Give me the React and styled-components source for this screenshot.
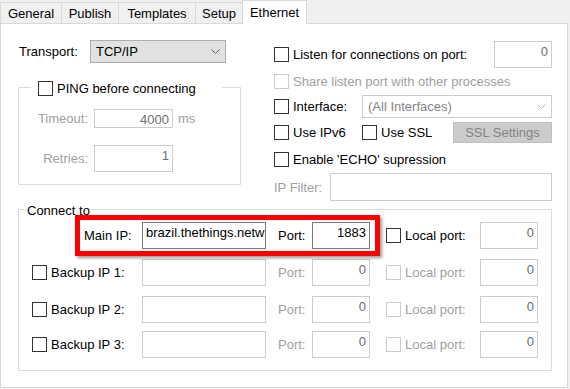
import React from "react";
import styled, { createGlobalStyle } from "styled-components";

const GlobalStyle = createGlobalStyle`
  html, body {
    margin: 0;
    padding: 0;
    background: #f0f0f0;
  }
  body {
    font-family: "Liberation Sans", Arial, sans-serif;
    font-size: 13px;
    color: #000;
  }
  * {
    box-sizing: border-box;
  }
`;

const Window = styled.div`
  width: 570px;
  height: 389px;
  overflow: hidden;
  background: #f0f0f0;
`;

const TabStrip = styled.div`
  display: flex;
  align-items: flex-end;
  height: 23px;
`;

const Tab = styled.div`
  width: ${(p) => p.$w}px;
  height: ${(p) => (p.$active ? 24 : 21)}px;
  margin-bottom: ${(p) => (p.$active ? -1 : 0)}px;
  margin-left: ${(p) => (p.$first ? 0 : -1)}px;
  padding-bottom: ${(p) => (p.$active ? 1 : 0)}px;
  border: 1px solid #d9d9d9;
  border-bottom: none;
  background: ${(p) => (p.$active ? "#fff" : "#f0f0f0")};
  display: flex;
  align-items: center;
  justify-content: center;
  line-height: 15px;
  position: relative;
  z-index: ${(p) => (p.$active ? 1 : 0)};
`;

const Panel = styled.div`
  width: 568px;
  height: 365px;
  background: #fff;
  border: 1px solid #d9d9d9;
  padding: 16px 0 0 17px;
`;

const TopSection = styled.div`
  display: flex;
  align-items: flex-start;
`;

const LeftColumn = styled.div`
  width: 223px;
  display: flex;
  flex-direction: column;
`;

const RightColumn = styled.div`
  width: 278px;
  margin-left: 33px;
  margin-top: 1px;
  display: flex;
  flex-direction: column;
`;

const Row = styled.div`
  display: flex;
  align-items: center;
  height: ${(p) => p.$h || 27}px;
  margin-top: ${(p) => p.$mt || 0}px;
  margin-left: ${(p) => p.$ml || 0}px;
  line-height: 15px;
  white-space: nowrap;
`;

const Text = styled.span`
  color: ${(p) => (p.$disabled ? "#a0a0a0" : "#000")};
  white-space: nowrap;
`;

const Cell = styled.div`
  display: flex;
  align-items: center;
  flex-shrink: 0;
  width: ${(p) => p.$w}px;
  padding-left: ${(p) => p.$pl || 0}px;
  padding-right: ${(p) => p.$pr || 0}px;
  justify-content: ${(p) => (p.$right ? "flex-end" : "flex-start")};
  color: ${(p) => (p.$disabled ? "#a0a0a0" : "#000")};
`;

const Check = styled.span`
  display: inline-block;
  flex-shrink: 0;
  width: 15px;
  height: 15px;
  margin-right: 4px;
  background: #fff;
  border: 1px solid ${(p) => (p.$disabled ? "#cccccc" : "#333333")};
`;

const Field = styled.div`
  flex-shrink: 0;
  width: ${(p) => p.$w}px;
  height: ${(p) => p.$h || 27}px;
  margin-left: ${(p) => (p.$push ? "auto" : "0")};
  border: 1px solid ${(p) => (p.$strong ? "#7a7a7a" : "#cccccc")};
  background: #fff;
  padding: 2px 3px 0 3px;
  line-height: 15px;
  overflow: hidden;
  white-space: nowrap;
  text-align: ${(p) => (p.$left ? "left" : "right")};
  color: ${(p) => (p.$dark ? "#000" : "#6d6d6d")};
`;

const Select = styled.div`
  flex-shrink: 0;
  width: ${(p) => p.$w}px;
  height: 23px;
  margin-left: ${(p) => (p.$push ? "auto" : "0")};
  display: flex;
  align-items: center;
  justify-content: space-between;
  padding: 0 5px 0 5px;
  background: ${(p) => (p.$disabled ? "#fff" : "#e1e1e1")};
  border: 1px solid ${(p) => (p.$disabled ? "#cccccc" : "#adadad")};
  color: ${(p) => (p.$disabled ? "#838383" : "#000")};
  line-height: 15px;
`;

const Button = styled.div`
  flex-shrink: 0;
  width: 99px;
  height: 21px;
  margin-left: auto;
  display: flex;
  align-items: center;
  justify-content: center;
  background: #cccccc;
  border: 1px solid #bfbfbf;
  color: #838383;
`;

const GroupBox = styled.div`
  width: ${(p) => p.$w}px;
  margin-top: ${(p) => p.$mt}px;
  border: 1px solid #dcdcdc;
  padding: 0 0 12px ${(p) => p.$pl || 0}px;
  display: flex;
  flex-direction: column;
`;

const Legend = styled.div`
  align-self: flex-start;
  display: flex;
  align-items: center;
  height: 16px;
  margin-top: -8px;
  margin-left: ${(p) => p.$ml}px;
  padding: ${(p) => p.$pad};
  background: #fff;
  line-height: 15px;
`;

const Highlight = styled.div`
  display: flex;
  align-items: center;
  position: relative;
  margin-left: 52px;
  height: 27px;

  &::after {
    content: "";
    position: absolute;
    left: -9px;
    right: -10px;
    top: -7px;
    bottom: -7px;
    border: 5px solid #ff0000;
    box-shadow: 2px 2px 3px rgba(0, 0, 0, 0.4);
    pointer-events: none;
  }
`;

const Chevron = ({ color }) => (
  <svg width="9" height="5" viewBox="0 0 9 5">
    <polyline points="0.5,0.5 4.5,4.5 8.5,0.5" fill="none" stroke={color} strokeWidth="1" />
  </svg>
);

const tabs = [
  { label: "General", w: 62 },
  { label: "Publish", w: 58 },
  { label: "Templates", w: 78 },
  { label: "Setup", w: 48 },
  { label: "Ethernet", w: 65, active: true },
];

function BackupRow({ n, mt }) {
  return (
    <Row $mt={mt}>
      <Cell $w={110}>
        <Check />
        <Text>Backup IP {n}:</Text>
      </Cell>
      <Field $w={124} $left />
      <Cell $w={46} $pl={12} $disabled>
        Port:
      </Cell>
      <Field $w={58}>0</Field>
      <Cell $w={110} $pl={16} $disabled>
        <Check $disabled />
        Local port:
      </Cell>
      <Field $w={58}>0</Field>
    </Row>
  );
}

export default function App() {
  return (
    <Window>
      <GlobalStyle />
      <TabStrip>
        {tabs.map((t, i) => (
          <Tab key={t.label} $w={t.w} $first={i === 0} $active={t.active}>
            {t.label}
          </Tab>
        ))}
      </TabStrip>
      <Panel>
        <TopSection>
          <LeftColumn>
            <Row $h={23}>
              <Cell $w={72} $pl={1}>
                Transport:
              </Cell>
              <Select $w={136}>
                <span>TCP/IP</span>
                <Chevron color="#606060" />
              </Select>
            </Row>
            <GroupBox $w={223} $mt={24}>
              <Legend $ml={12} $pad="0 26px 0 7px">
                <Check />
                <Text>PING before connecting</Text>
              </Legend>
              <Row $h={19} $mt={13}>
                <Cell $w={75} $pr={6} $right $disabled>
                  Timeout:
                </Cell>
                <Field $w={79} $h={19}>
                  4000
                </Field>
                <Text $disabled style={{ marginLeft: 5 }}>
                  ms
                </Text>
              </Row>
              <Row $h={27} $mt={17}>
                <Cell $w={75} $pr={6} $right $disabled>
                  Retries:
                </Cell>
                <Field $w={79}>1</Field>
              </Row>
            </GroupBox>
          </LeftColumn>

          <RightColumn>
            <Row $h={27}>
              <Check />
              <Text>Listen for connections on port:</Text>
              <Field $w={58} $push>
                0
              </Field>
            </Row>
            <Row $h={16} $mt={5}>
              <Check $disabled />
              <Text $disabled>Share listen port with other processes</Text>
            </Row>
            <Row $h={23} $mt={6}>
              <Check />
              <Text>Interface:</Text>
              <Select $w={190} $push $disabled>
                <span>(All Interfaces)</span>
                <Chevron color="#b5b5b5" />
              </Select>
            </Row>
            <Row $h={21} $mt={4}>
              <Cell $w={88}>
                <Check />
                Use IPv6
              </Cell>
              <Check />
              <Text>Use SSL</Text>
              <Button>SSL Settings</Button>
            </Row>
            <Row $h={16} $mt={8}>
              <Check />
              <Text>Enable 'ECHO' supression</Text>
            </Row>
            <Row $h={28} $mt={6}>
              <Cell $w={56} $disabled>
                IP Filter:
              </Cell>
              <Field $w={222} $h={28} />
            </Row>
          </RightColumn>
        </TopSection>

        <GroupBox $w={534} $mt={8} $pl={13}>
          <Legend $ml={-6} $pad="0 1px">
            Connect to
          </Legend>
          <Row $mt={4}>
            <Highlight>
              <Cell $w={58}>Main IP:</Cell>
              <Field $w={124} $left $strong $dark>
                brazil.thethings.netw
              </Field>
              <Cell $w={46} $pl={12}>
                Port:
              </Cell>
              <Field $w={58} $strong $dark>
                1883
              </Field>
            </Highlight>
            <Cell $w={110} $pl={16}>
              <Check />
              Local port:
            </Cell>
            <Field $w={58}>0</Field>
          </Row>
          <BackupRow n={1} mt={10} />
          <BackupRow n={2} mt={10} />
          <BackupRow n={3} mt={8} />
        </GroupBox>
      </Panel>
    </Window>
  );
}
